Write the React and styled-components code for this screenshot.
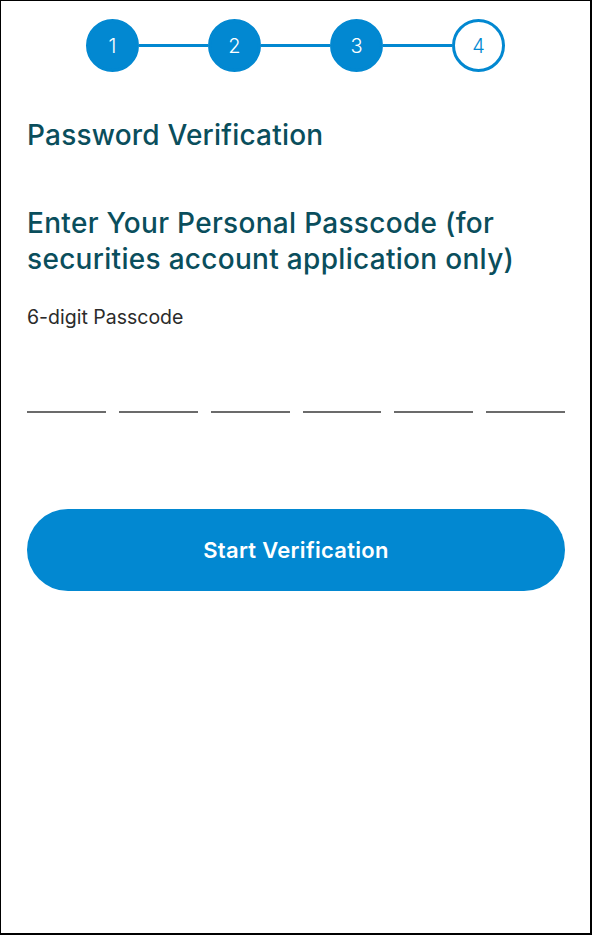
import React from 'react';
import styled, {createGlobalStyle} from 'styled-components';

const GlobalStyle = createGlobalStyle`
    html, body {
        margin: 0;
        padding: 0;
        background: #fff;
    }
    body {
        font-family: Inter, "Noto Sans", sans-serif;
        -webkit-font-smoothing: antialiased;
    }
`;

const steps = [1, 2, 3, 4];
const current = 4;

const App = () => {
    return (
        <>
            <GlobalStyle />
            <Frame>
                <Stepper>
                    {steps.map((n, i) => (
                        <React.Fragment key={n}>
                            {i > 0 && <Connector />}
                            <StepCircle active={n === current}>{n}</StepCircle>
                        </React.Fragment>
                    ))}
                </Stepper>
                <Content>
                    <Title>Password Verification</Title>
                    <Heading>Enter Your Personal Passcode (for securities account application only)</Heading>
                    <Label>6-digit Passcode</Label>
                    <CodeRow>
                        {[0, 1, 2, 3, 4, 5].map(i => <CodeSlot key={i} />)}
                    </CodeRow>
                    <PrimaryButton>Start Verification</PrimaryButton>
                </Content>
            </Frame>
        </>
    );
};

const Frame = styled.div`
    box-sizing: border-box;
    width: 592px;
    height: 935px;
    border: 1px solid #000;
    border-right-width: 2px;
    border-bottom-width: 2px;
    background: #fff;
    overflow: hidden;
`;

const Stepper = styled.div`
    display: flex;
    align-items: center;
    justify-content: center;
    padding-top: 18px;
`;

const StepCircle = styled.div`
    box-sizing: border-box;
    width: 53px;
    height: 53px;
    border-radius: 50%;
    display: flex;
    align-items: center;
    justify-content: center;
    font-size: 20px;
    font-weight: 300;
    background: ${p => p.active ? '#fff' : '#0288d1'};
    color: ${p => p.active ? '#0288d1' : '#fff'};
    border: 3px solid #0288d1;
`;

const Connector = styled.div`
    width: 69px;
    height: 3px;
    background: #0288d1;
`;

const Content = styled.div`
    padding: 0 25px 0 26px;
`;

const Title = styled.h1`
    margin: 47px 0 0;
    font-size: 28px;
    line-height: 32px;
    font-weight: 500;
    color: #0a4e5c;
    letter-spacing: 0.2px;
`;

const Heading = styled.h2`
    margin: 54px 0 0;
    font-size: 28px;
    line-height: 36px;
    font-weight: 500;
    color: #0a4e5c;
    letter-spacing: 0.3px;
`;

const Label = styled.div`
    margin-top: 28px;
    font-size: 19.5px;
    line-height: 24px;
    color: #2b2b2b;
`;

const CodeRow = styled.div`
    display: grid;
    grid-template-columns: repeat(6, 1fr);
    column-gap: 13px;
    margin-top: 82px;
`;

const CodeSlot = styled.div`
    height: 2px;
    background: #6b6b6b;
`;

const PrimaryButton = styled.button`
    display: block;
    width: 100%;
    height: 82px;
    margin-top: 96px;
    border: none;
    border-radius: 41px;
    background: #0288d1;
    color: #fff;
    font-family: Inter, "Noto Sans", sans-serif;
    font-size: 22px;
    font-weight: 600;
    letter-spacing: 0.3px;
    cursor: pointer;
`;

export default App;
